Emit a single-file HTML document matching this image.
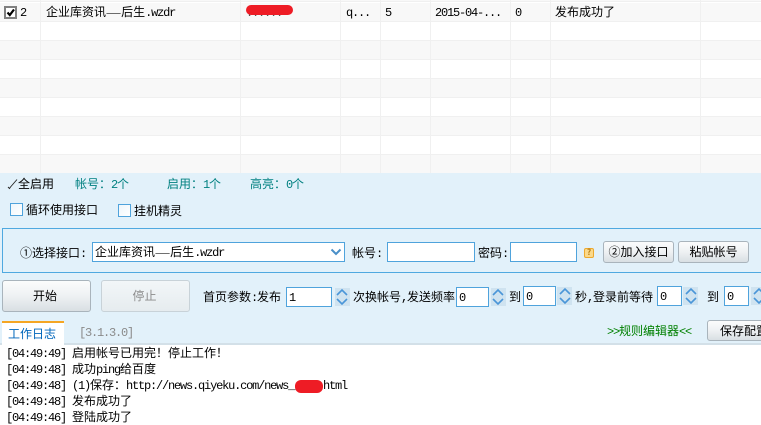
<!DOCTYPE html>
<html>
<head>
<meta charset="utf-8">
<style>
html,body{margin:0;padding:0;background:#fff}
#app{position:relative;width:761px;height:425px;overflow:hidden;background:#fff;font-family:"WenQuanYi Zen Hei","Noto Sans CJK SC",sans-serif;font-size:12px;color:#000}
i{font-family:"Liberation Mono",monospace;font-style:normal;font-size:12px;letter-spacing:-1.2px}
.a{position:absolute}
.t{position:absolute;white-space:nowrap;line-height:14px;height:14px}
.row{position:absolute;left:0;width:761px;height:18px;border-bottom:1px solid #f0f0f0}
.g{background:#f8f8f8}
.col{position:absolute;top:0;width:1px;height:173px;background:#f0f0f0}
.inp{position:absolute;background:#fff;border:1px solid #4fa3dc;box-sizing:border-box;line-height:18px;padding-left:2px;white-space:nowrap}
.btn{position:absolute;box-sizing:border-box;border:1px solid #a9b4bc;border-radius:3px;background:linear-gradient(#fbfcfc,#eef1f3 50%,#d9dfe3);text-align:center;white-space:nowrap}
.spin{position:absolute;background:#cfe3f0;width:15px;height:18px}
.cb{position:absolute;width:13px;height:13px;box-sizing:border-box;border:1px solid #4fa3dc;background:linear-gradient(135deg,#eef6fb,#fff)}
.teal{color:#008080}
.d{font-size:9px;letter-spacing:0}
</style>
</head>
<body>
<div id="app">
  <div class="row" style="top:0;height:1px;background:#f8f8f8;border-bottom:1px solid #f0f0f0"></div>
  <div class="row g" style="top:3px"></div>
  <div class="row" style="top:22px"></div>
  <div class="row g" style="top:41px"></div>
  <div class="row" style="top:60px"></div>
  <div class="row g" style="top:79px"></div>
  <div class="row" style="top:98px"></div>
  <div class="row g" style="top:117px"></div>
  <div class="row" style="top:136px"></div>
  <div class="row g" style="top:155px"></div>
  <div class="col" style="left:40px"></div>
  <div class="col" style="left:240px"></div>
  <div class="col" style="left:340px"></div>
  <div class="col" style="left:380px"></div>
  <div class="col" style="left:430px"></div>
  <div class="col" style="left:510px"></div>
  <div class="col" style="left:550px"></div>
  <div class="col" style="left:700px"></div>

  <div class="a" style="left:4px;top:6px;width:13px;height:13px;box-sizing:border-box;border:2px solid #808080;background:#fff"></div>
  <svg class="a" style="left:4px;top:6px" width="13" height="13"><path d="M3.5 6.5 L5.8 9 L10 3.5" fill="none" stroke="#000" stroke-width="2.2"/></svg>
  <div class="t" style="left:20px;top:5px"><i>2</i></div>
  <div class="t" style="left:46px;top:5px">企业库资讯<span class="d">——</span>后生<i>.wzdr</i></div>
  <div class="t" style="left:246px;top:5px;color:#555"><i>......</i></div>
  <div class="a" style="left:246px;top:5px;width:47px;height:10px;background:#ee1c25;border-radius:5px"></div>
  <div class="t" style="left:346px;top:5px"><i>q...</i></div>
  <div class="t" style="left:385px;top:5px"><i>5</i></div>
  <div class="t" style="left:435px;top:5px"><i>2015-04-...</i></div>
  <div class="t" style="left:515px;top:5px"><i>0</i></div>
  <div class="t" style="left:555px;top:5px">发布成功了</div>

  <div class="a" style="left:0;top:173px;width:761px;height:171px;background:#e2f1fa"></div>
  <div class="a" style="left:0;top:343px;width:761px;height:2px;background:#d3e0e8"></div>

  <svg class="a" style="left:7px;top:179px" width="12" height="11"><path d="M1 8 L2.5 9.5 L3.5 8 M3.5 8 L10 0.5" fill="none" stroke="#222" stroke-width="0.9"/></svg>
  <div class="t" style="left:18px;top:177px">全启用</div>
  <div class="t teal" style="left:75px;top:177px">帐号：<i>2</i>个</div>
  <div class="t teal" style="left:167px;top:177px">启用：<i>1</i>个</div>
  <div class="t teal" style="left:250px;top:177px">高亮：<i>0</i>个</div>

  <div class="cb" style="left:10px;top:203px"></div>
  <div class="t" style="left:26px;top:203px">循环使用接口</div>
  <div class="cb" style="left:118px;top:204px"></div>
  <div class="t" style="left:134px;top:204px">挂机精灵</div>

  <div class="a" style="left:2px;top:228px;width:770px;height:45px;box-sizing:border-box;border:1px solid #4fa9e0"></div>
  <div class="t" style="left:20px;top:246px">①选择接口<i>:</i></div>
  <div class="inp" style="left:92px;top:242px;width:253px;height:20px">企业库资讯<span class="d">——</span>后生<i>.wzdr</i></div>
  <svg class="a" style="left:330px;top:248px" width="12" height="8"><path d="M1.5 1.5 L6 6 L10.5 1.5" fill="none" stroke="#4a8fc8" stroke-width="2"/></svg>
  <div class="t" style="left:352px;top:246px">帐号<i>:</i></div>
  <div class="inp" style="left:387px;top:242px;width:88px;height:20px"></div>
  <div class="t" style="left:478px;top:246px">密码<i>:</i></div>
  <div class="inp" style="left:510px;top:242px;width:67px;height:20px"></div>
  <div class="a" style="left:584px;top:248px;width:10px;height:10px;box-sizing:border-box;background:#fbd98a;border:1px solid #eda92e;border-radius:2px;color:#b57a10;font-size:8px;line-height:8px;text-align:center;font-weight:bold">?</div>
  <div class="btn" style="left:603px;top:241px;width:71px;height:22px;line-height:20px">②加入接口</div>
  <div class="btn" style="left:678px;top:241px;width:71px;height:22px;line-height:20px">粘贴帐号</div>

  <div class="btn" style="left:2px;top:280px;width:89px;height:32px;line-height:30px;padding-right:3px">开始</div>
  <div class="btn" style="left:101px;top:280px;width:89px;height:32px;line-height:30px;padding-right:2px;color:#8c8c8c;border-color:#c8d2d8;background:linear-gradient(#f2f6f8,#e6ecef)">停止</div>

  <div class="t" style="left:203px;top:290px">首页参数<i>:</i>发布</div>
  <div class="inp" style="left:286px;top:287px;width:46px;height:20px"><i>1</i></div>
  <div class="spin" style="left:335px;top:288px"></div>
  <div class="t" style="left:353px;top:290px">次换帐号<i>,</i>发送频率</div>
  <div class="inp" style="left:456px;top:287px;width:33px;height:20px"><i>0</i></div>
  <div class="spin" style="left:491px;top:288px"></div>
  <div class="t" style="left:509px;top:290px">到</div>
  <div class="inp" style="left:523px;top:286px;width:33px;height:20px"><i>0</i></div>
  <div class="spin" style="left:557px;top:287px"></div>
  <div class="t" style="left:575px;top:290px">秒<i>,</i>登录前等待</div>
  <div class="inp" style="left:657px;top:286px;width:25px;height:20px"><i>0</i></div>
  <div class="spin" style="left:683px;top:287px"></div>
  <div class="t" style="left:707px;top:290px">到</div>
  <div class="inp" style="left:724px;top:286px;width:25px;height:20px"><i>0</i></div>
  <div class="spin" style="left:751px;top:287px"></div>
  <svg class="a" style="left:0;top:0" width="761" height="425"><g fill="none" stroke="#4a96d8" stroke-width="1.6">
    <path d="M337 295 L342 290 L347 295 M337 299 L342 304 L347 299"/>
    <path d="M493 295 L498 290 L503 295 M493 299 L498 304 L503 299"/>
    <path d="M560 294 L565 289 L570 294 M560 298 L565 303 L570 298"/>
    <path d="M686 294 L691 289 L696 294 M686 298 L691 303 L696 298"/>
    <path d="M754 294 L759 289 L764 294 M754 298 L759 303 L764 298"/>
  </g></svg>

  <div class="a" style="left:2px;top:321px;width:62px;height:24px;background:#fff"></div>
  <div class="a" style="left:2px;top:321px;width:62px;height:2px;background:#f5a623"></div>
  <div class="t" style="left:8px;top:327px;color:#0066bb">工作日志</div>
  <div class="t" style="left:79px;top:325px;color:#8a8a8a"><i>[3.1.3.0]</i></div>
  <div class="t" style="left:607px;top:324px;color:#008000"><i>&gt;&gt;</i>规则编辑器<i>&lt;&lt;</i></div>
  <div class="btn" style="left:707px;top:320px;width:70px;height:21px;line-height:19px;text-align:left;padding-left:12px">保存配置</div>

  <div class="t" style="left:6px;top:346px"><i>[04:49:49] </i>启用帐号已用完！停止工作！</div>
  <div class="t" style="left:6px;top:362px"><i>[04:49:48] </i>成功<i>ping</i>给百度</div>
  <div class="t" style="left:6px;top:378px"><i>[04:49:48] (1)</i>保存：<i>http://news.qiyeku.com/news_</i></div>
  <div class="t" style="left:323px;top:378px"><i>html</i></div>
  <div class="a" style="left:295px;top:380px;width:28px;height:13px;background:#ee1c25;border-radius:6px"></div>
  <div class="t" style="left:6px;top:394px"><i>[04:49:48] </i>发布成功了</div>
  <div class="t" style="left:6px;top:410px"><i>[04:49:46] </i>登陆成功了</div>
</div>
</body>
</html>
